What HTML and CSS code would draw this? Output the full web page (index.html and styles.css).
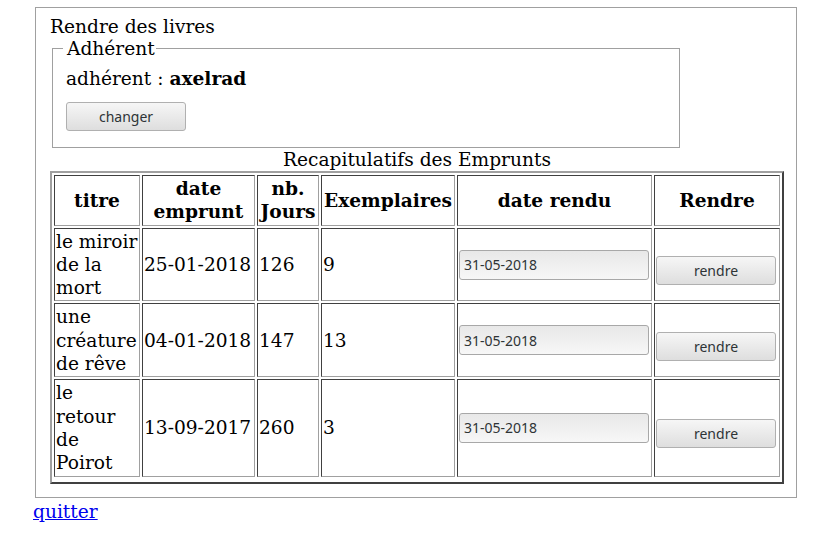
FILE: index.html
```html
<!DOCTYPE html>
<html lang="fr">
<head>
    <meta charset="UTF-8">
    <title>Rendre des livres</title>
    <link rel="stylesheet" href="styles.css">
</head>
<body>
    <div class="page">
        <div class="box">
            <div class="titre">Rendre des livres</div>
            <fieldset class="adherent">
                <legend>Adhérent</legend>
                <p class="nom">adhérent : <b>axelrad</b></p>
                <button type="button" class="btn">changer</button>
            </fieldset>
            <table class="emprunts">
                <caption>Recapitulatifs des Emprunts</caption>
                <tr>
                    <th class="c-titre">titre</th>
                    <th class="c-date">date emprunt</th>
                    <th class="c-jours">nb. Jours</th>
                    <th class="c-ex">Exemplaires</th>
                    <th class="c-rendu">date rendu</th>
                    <th class="c-rendre">Rendre</th>
                </tr>
                <tr>
                    <td>le miroir de la mort</td>
                    <td class="date">25-01-2018</td>
                    <td>126</td>
                    <td>9</td>
                    <td><input type="text" class="champ" value="31-05-2018"></td>
                    <td><button type="button" class="btn btn-rendre">rendre</button></td>
                </tr>
                <tr>
                    <td>une créature de rêve</td>
                    <td class="date">04-01-2018</td>
                    <td>147</td>
                    <td>13</td>
                    <td><input type="text" class="champ" value="31-05-2018"></td>
                    <td><button type="button" class="btn btn-rendre">rendre</button></td>
                </tr>
                <tr>
                    <td>le retour de Poirot</td>
                    <td class="date">13-09-2017</td>
                    <td>260</td>
                    <td>3</td>
                    <td><input type="text" class="champ" value="31-05-2018"></td>
                    <td><button type="button" class="btn btn-rendre">rendre</button></td>
                </tr>
            </table>
        </div>
        <a href="#" class="quitter">quitter</a>
    </div>
</body>
</html>
```

FILE: styles.css
```css
*{
    margin: 0;
    padding: 0;
}
body{
    margin: 7px 0 0 33px;
    font-family: "DejaVu Serif", serif;
    font-size: 18.6px;
    line-height: 23px;
    color: #000;
    background-color: #fff;
}
.page{
    width: 764px;
}
.box{
    margin: 0 0 2px 2px;
    border: 1px solid #a0a0a0;
    padding: 7px 13px 13px 14px;
}
.adherent{
    width: 600px;
    margin: 0 2px;
    border: 1px solid #a0a0a0;
    padding: 8px 13px 16px 13px;
}
.adherent legend{
    margin-left: -3px;
    padding: 0 1px 0 4px;
    line-height: 21px;
}
.nom{
    margin-bottom: 12px;
}
.btn{
    display: block;
    width: 120px;
    height: 29px;
    font-family: "Noto Sans", sans-serif;
    font-size: 14px;
    color: #2e3436;
    background: linear-gradient(#f6f6f6, #dedede);
    border: 1px solid #b0b0b0;
    border-radius: 3px;
}
.emprunts{
    width: 732px;
    table-layout: fixed;
    border-collapse: separate;
    border-spacing: 2px;
    border: 2px solid;
    border-color: #a0a0a0 #404040 #404040 #a0a0a0;
    padding-bottom: 3px;
}
.emprunts caption{
    text-align: center;
}
.emprunts th,
.emprunts td{
    box-sizing: border-box;
    padding: 1px;
    border: 1px solid;
    border-color: #404040 #a0a0a0 #a0a0a0 #404040;
    vertical-align: middle;
    line-height: 23.3px;
}
.emprunts th{
    font-weight: bold;
    text-align: center;
}
.emprunts td{
    text-align: left;
}
.emprunts td.date{
    white-space: nowrap;
}
.c-titre{ width: 86px; }
.c-date{ width: 113px; }
.c-jours{ width: 62px; }
.c-ex{ width: 134px; }
.c-rendu{ width: 195px; }
.c-rendre{ width: 126px; }
.champ{
    display: block;
    box-sizing: border-box;
    width: 190px;
    height: 30px;
    padding: 0 4px;
    font-family: "Noto Sans", sans-serif;
    font-size: 14px;
    color: #2e3436;
    background: linear-gradient(#e8e8e8, #f7f7f7);
    border: 1px solid #a8a8a8;
    border-radius: 3px;
}
.btn-rendre{
    margin-top: 12px;
}
.quitter{
    color: #0000ee;
    text-decoration: underline;
}
```
